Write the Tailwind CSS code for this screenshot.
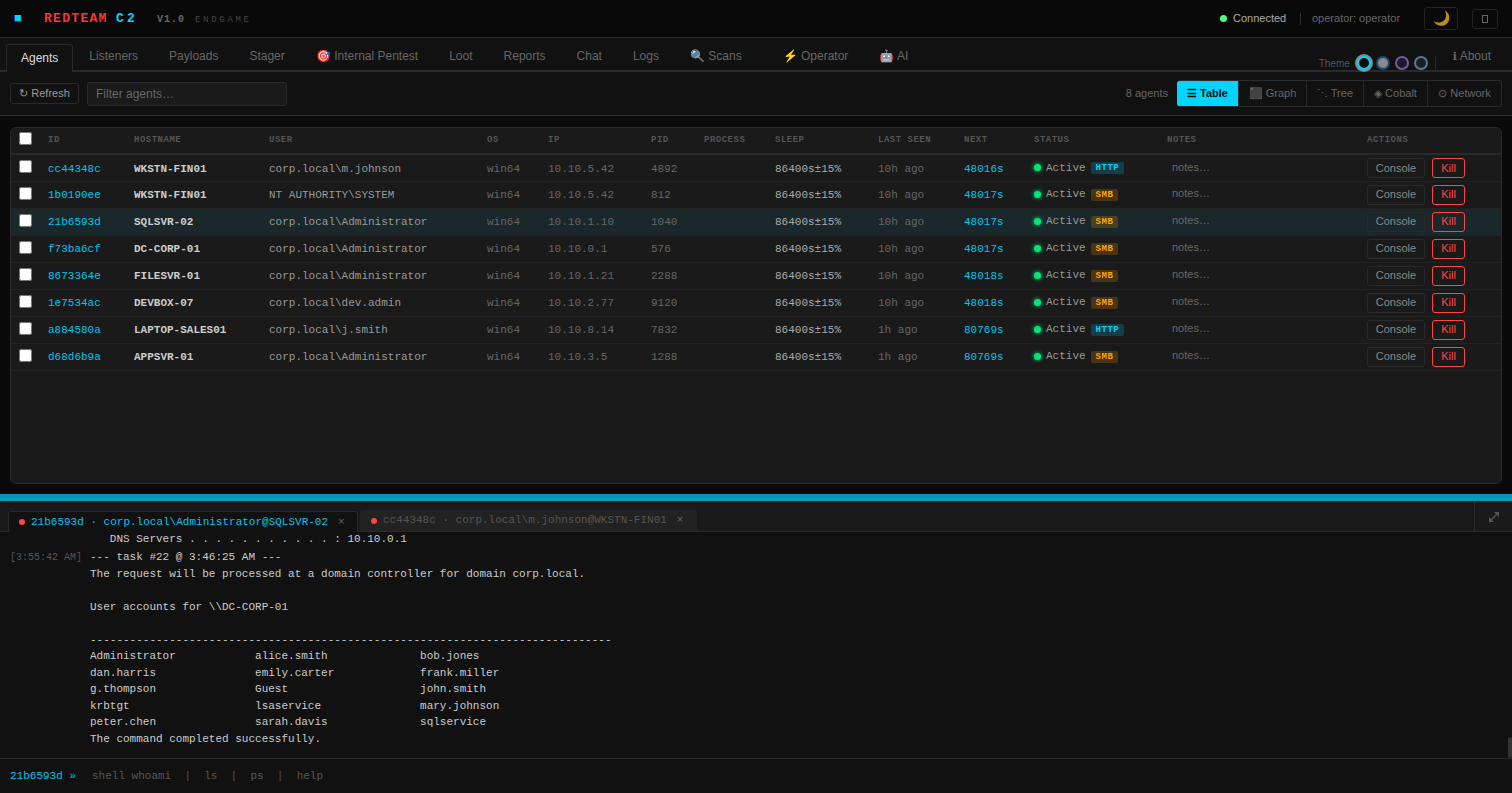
<!DOCTYPE html>
<html lang="en">
<head>
<meta charset="utf-8">
<title>RedTeam C2</title>
<script src="https://cdn.jsdelivr.net/npm/@tailwindcss/browser@4"></script>
</head>
<body class="bg-[#0a0a0a]">
<div class="w-[1512px] h-[793px] overflow-hidden flex flex-col font-['Liberation_Sans',sans-serif] text-[#ccc]">

  <!-- Header -->
  <header class="h-[38px] shrink-0 flex items-center bg-[#090909] border-b border-[#2a2a2a] pl-[14px] pr-[14px]">
    <span class="font-['Liberation_Mono',monospace] text-[13px] font-bold text-[#00d4ff] w-[30px]">■</span>
    <span class="font-['Liberation_Mono',monospace] text-[13px] font-bold tracking-[1.3px] text-[#ff3333] w-[72px]">REDTEAM</span>
    <span class="font-['Liberation_Mono',monospace] text-[13px] font-bold tracking-[3.2px] text-[#00d4ff] w-[41px]">C2</span>
    <span class="font-['Liberation_Mono',monospace] text-[10px] font-bold tracking-[1px] text-[#666] w-[38px] translate-y-px">V1.0</span>
    <span class="font-['Liberation_Mono',monospace] text-[9px] tracking-[2.7px] text-[#444] translate-y-[2px]">ENDGAME</span>
    <div class="ml-auto flex items-center">
      <span class="w-[7px] h-[7px] rounded-full bg-[#4dff88] mr-[6px]"></span>
      <span class="text-[11px] text-[#aaa] w-[67px]">Connected</span>
      <span class="w-px h-3 bg-[#2a2a2a] mr-[11px]"></span>
      <span class="text-[11px] text-[#666] w-[112px]">operator: operator</span>
      <span class="w-[34px] h-[23px] flex items-center justify-center border border-[#222] rounded-[3px] mr-[14px]"><span class="text-[14px] opacity-70">🌙</span></span>
      <span class="w-[26px] h-[20px] flex items-center justify-center border border-[#222] rounded-[3px]"><span class="w-[6px] h-[8px] border border-[#666]"></span></span>
    </div>
  </header>

  <!-- Tabs -->
  <nav class="h-[34px] shrink-0 flex items-end bg-[#111] border-b-2 border-[#2a2a2a] pl-[6px] pr-[6px] text-[12px] text-[#666] gap-px">
    <span class="relative top-[2px] h-[28px] px-[14px] pb-[2px] flex items-center bg-[#111] text-[#ddd] border border-b-0 border-[#2a2a2a] rounded-t-[3px]">Agents</span>
    <span class="h-[28px] px-[15px] flex items-center">Listeners</span>
    <span class="h-[28px] px-[15px] flex items-center">Payloads</span>
    <span class="h-[28px] px-[15px] flex items-center">Stager</span>
    <span class="h-[28px] px-[15px] flex items-center">🎯 Internal Pentest</span>
    <span class="h-[28px] px-[15px] flex items-center">Loot</span>
    <span class="h-[28px] px-[15px] flex items-center">Reports</span>
    <span class="h-[28px] px-[15px] flex items-center">Chat</span>
    <span class="h-[28px] px-[15px] flex items-center">Logs</span>
    <span class="h-[28px] px-[15px] flex items-center">🔍 Scans</span>
    <span class="h-[28px] px-[15px] ml-[10px] flex items-center">⚡ Operator</span>
    <span class="h-[28px] px-[15px] flex items-center">🤖 AI</span>
    <div class="ml-auto flex items-center h-[28px] relative">
      <div class="flex items-center h-[15px] relative top-[7px]">
        <span class="text-[10px] text-[#555] mr-[7px]">Theme</span>
        <span class="w-[14px] h-[14px] rounded-full border-2 border-[#00d4ff] bg-[#0a0a0a] ring-2 ring-[#888] mr-[5px]"></span>
        <span class="w-[14px] h-[14px] rounded-full border-2 border-[#1a4a7a] bg-[#8a8a8a] mr-[5px]"></span>
        <span class="w-[14px] h-[14px] rounded-full border-2 border-[#7a5a9a] bg-[#1a1a2a] mr-[5px]"></span>
        <span class="w-[14px] h-[14px] rounded-full border-2 border-[#5a7a8a] bg-[#1a1f2a] mr-[7px]"></span>
        <span class="w-px h-[14px] bg-[#2a2a2a] mr-[2px]"></span>
      </div>
      <span class="pl-[15px] pr-[15px]"><span class="font-['DejaVu_Sans',sans-serif] text-[11px]">ℹ</span> About</span>
    </div>
  </nav>

  <!-- Toolbar -->
  <div class="h-[44px] shrink-0 flex items-center bg-[#111] border-b border-[#2a2a2a] pl-[10px] pr-[10px]">
    <button class="h-[21px] w-[69px] flex items-center justify-center border border-[#2a2a2a] rounded-[3px] text-[11px] text-[#999] mr-[8px]">↻ Refresh</button>
    <input class="h-[24px] w-[200px] bg-[#1a1a1a] border border-[#2a2a2a] rounded-[3px] px-2 text-[12px] text-[#ccc] placeholder:text-[#666]" placeholder="Filter agents…">
    <span class="ml-auto text-[11px] text-[#666] mr-[9px]">8 agents</span>
    <div class="flex h-[27px] border-y border-r border-[#2a2a2a] rounded-[3px] overflow-hidden text-[11px] text-[#666]">
      <span class="w-[62px] -my-px flex items-center justify-center bg-[#00d4ff] text-[#0a0a0a] font-bold border-r border-[#2a2a2a]">☰ Table</span>
      <span class="w-[68px] flex items-center justify-center border-r border-[#2a2a2a]">⬛ Graph</span>
      <span class="w-[57px] flex items-center justify-center border-r border-[#2a2a2a]">⋱ Tree</span>
      <span class="w-[64px] flex items-center justify-center border-r border-[#2a2a2a]">◈ Cobalt</span>
      <span class="w-[73px] flex items-center justify-center">⊙ Network</span>
    </div>
  </div>

  <!-- Agents table -->
  <main class="h-[378px] shrink-0 bg-[#0a0a0a] pt-[11px] pb-[10px] px-[10px]">
    <div class="h-full bg-[#1a1a1a] border border-[#2a2a2a] rounded-[6px] overflow-hidden">
      <table class="w-full table-fixed border-collapse font-['Liberation_Mono',monospace] text-[11px]">
        <colgroup>
          <col class="w-[29px]"><col class="w-[86px]"><col class="w-[135px]"><col class="w-[218px]"><col class="w-[61px]"><col class="w-[103px]"><col class="w-[53px]"><col class="w-[71px]"><col class="w-[103px]"><col class="w-[86px]"><col class="w-[70px]"><col class="w-[133px]"><col class="w-[200px]"><col>
        </colgroup>
        <thead>
          <tr class="h-[26px] border-b-2 border-[#2a2a2a] text-left text-[9px] font-bold tracking-[0.5px] text-[#555]">
            <th class="pl-2"><input type="checkbox" class="block w-[13px] h-[13px] -translate-y-[2px]"></th>
            <th class="pl-2">ID</th><th class="pl-2">HOSTNAME</th><th class="pl-2">USER</th><th class="pl-2">OS</th><th class="pl-2">IP</th><th class="pl-2">PID</th><th class="pl-2">PROCESS</th><th class="pl-2">SLEEP</th><th class="pl-2">LAST SEEN</th><th class="pl-2">NEXT</th><th class="pl-2">STATUS</th><th class="pl-2">NOTES</th><th class="pl-2">ACTIONS</th>
          </tr>
        </thead>
        <tbody class="[&>tr>td]:pt-[2px] [&>tr>td:last-child]:pt-0 [&>tr>td:nth-child(13)]:pt-0">
          <tr class="h-[27px] border-b border-[#222]">
            <td class="pl-2"><input type="checkbox" class="block w-[13px] h-[13px] -translate-y-[2px]"></td>
            <td class="pl-2 text-[#00c4ec]">cc44348c</td><td class="pl-2 font-bold text-[#ccc]">WKSTN-FIN01</td><td class="pl-2 text-[#999]">corp.local\m.johnson</td><td class="pl-2 text-[#666]">win64</td><td class="pl-2 text-[#666]">10.10.5.42</td><td class="pl-2 text-[#666]">4892</td><td class="pl-2"></td><td class="pl-2 text-[#aaa]">86400s±15%</td><td class="pl-2 text-[#666]">10h ago</td><td class="pl-2 text-[#00c4ec]">48016s</td>
            <td class="pl-2"><div class="flex items-center -translate-y-px"><span class="w-[7px] h-[7px] rounded-full bg-[#00e676] shadow-[0_0_4px_#00e676] mr-[5px]"></span><span class="text-[#999] mr-[5px]">Active</span><span class="px-[5px] h-[12px] leading-[12px] tracking-[0.5px] rounded-[2px] bg-[#00d4ff]/20 text-[#00d4ff] text-[9px] font-bold">HTTP</span></div></td>
            <td class="pl-[13px] font-['Liberation_Sans',sans-serif] text-[#666]"><span class="block -translate-y-px">notes…</span></td>
            <td class="pl-2"><div class="flex gap-[7px] font-['Liberation_Sans',sans-serif]"><span class="w-[58px] h-[20px] flex items-center justify-center border border-[#2a2a2a] rounded-[3px] text-[#888]">Console</span><span class="w-[33px] h-[20px] flex items-center justify-center border border-[#ff4444] rounded-[3px] text-[#ff4444]">Kill</span></div></td>
          </tr>
          <tr class="h-[27px] border-b border-[#222]">
            <td class="pl-2"><input type="checkbox" class="block w-[13px] h-[13px] -translate-y-[2px]"></td>
            <td class="pl-2 text-[#00c4ec]">1b0190ee</td><td class="pl-2 font-bold text-[#ccc]">WKSTN-FIN01</td><td class="pl-2 text-[#999]">NT AUTHORITY\SYSTEM</td><td class="pl-2 text-[#666]">win64</td><td class="pl-2 text-[#666]">10.10.5.42</td><td class="pl-2 text-[#666]">812</td><td class="pl-2"></td><td class="pl-2 text-[#aaa]">86400s±15%</td><td class="pl-2 text-[#666]">10h ago</td><td class="pl-2 text-[#00c4ec]">48017s</td>
            <td class="pl-2"><div class="flex items-center -translate-y-px"><span class="w-[7px] h-[7px] rounded-full bg-[#00e676] shadow-[0_0_4px_#00e676] mr-[5px]"></span><span class="text-[#999] mr-[5px]">Active</span><span class="px-[5px] h-[12px] leading-[12px] tracking-[0.5px] rounded-[2px] bg-[#ffa500]/20 text-[#ffa500] text-[9px] font-bold">SMB</span></div></td>
            <td class="pl-[13px] font-['Liberation_Sans',sans-serif] text-[#666]"><span class="block -translate-y-px">notes…</span></td>
            <td class="pl-2"><div class="flex gap-[7px] font-['Liberation_Sans',sans-serif]"><span class="w-[58px] h-[20px] flex items-center justify-center border border-[#2a2a2a] rounded-[3px] text-[#888]">Console</span><span class="w-[33px] h-[20px] flex items-center justify-center border border-[#ff4444] rounded-[3px] text-[#ff4444]">Kill</span></div></td>
          </tr>
          <tr class="h-[27px] border-b border-[#222] bg-[#1a272b]">
            <td class="pl-2"><input type="checkbox" class="block w-[13px] h-[13px] -translate-y-[2px]"></td>
            <td class="pl-2 text-[#00c4ec]">21b6593d</td><td class="pl-2 font-bold text-[#ccc]">SQLSVR-02</td><td class="pl-2 text-[#999]">corp.local\Administrator</td><td class="pl-2 text-[#666]">win64</td><td class="pl-2 text-[#666]">10.10.1.10</td><td class="pl-2 text-[#666]">1040</td><td class="pl-2"></td><td class="pl-2 text-[#aaa]">86400s±15%</td><td class="pl-2 text-[#666]">10h ago</td><td class="pl-2 text-[#00c4ec]">48017s</td>
            <td class="pl-2"><div class="flex items-center -translate-y-px"><span class="w-[7px] h-[7px] rounded-full bg-[#00e676] shadow-[0_0_4px_#00e676] mr-[5px]"></span><span class="text-[#999] mr-[5px]">Active</span><span class="px-[5px] h-[12px] leading-[12px] tracking-[0.5px] rounded-[2px] bg-[#ffa500]/20 text-[#ffa500] text-[9px] font-bold">SMB</span></div></td>
            <td class="pl-[13px] font-['Liberation_Sans',sans-serif] text-[#666]"><span class="block -translate-y-px">notes…</span></td>
            <td class="pl-2"><div class="flex gap-[7px] font-['Liberation_Sans',sans-serif]"><span class="w-[58px] h-[20px] flex items-center justify-center border border-[#2a2a2a] rounded-[3px] text-[#888]">Console</span><span class="w-[33px] h-[20px] flex items-center justify-center border border-[#ff4444] rounded-[3px] text-[#ff4444]">Kill</span></div></td>
          </tr>
          <tr class="h-[27px] border-b border-[#222]">
            <td class="pl-2"><input type="checkbox" class="block w-[13px] h-[13px] -translate-y-[2px]"></td>
            <td class="pl-2 text-[#00c4ec]">f73ba6cf</td><td class="pl-2 font-bold text-[#ccc]">DC-CORP-01</td><td class="pl-2 text-[#999]">corp.local\Administrator</td><td class="pl-2 text-[#666]">win64</td><td class="pl-2 text-[#666]">10.10.0.1</td><td class="pl-2 text-[#666]">576</td><td class="pl-2"></td><td class="pl-2 text-[#aaa]">86400s±15%</td><td class="pl-2 text-[#666]">10h ago</td><td class="pl-2 text-[#00c4ec]">48017s</td>
            <td class="pl-2"><div class="flex items-center -translate-y-px"><span class="w-[7px] h-[7px] rounded-full bg-[#00e676] shadow-[0_0_4px_#00e676] mr-[5px]"></span><span class="text-[#999] mr-[5px]">Active</span><span class="px-[5px] h-[12px] leading-[12px] tracking-[0.5px] rounded-[2px] bg-[#ffa500]/20 text-[#ffa500] text-[9px] font-bold">SMB</span></div></td>
            <td class="pl-[13px] font-['Liberation_Sans',sans-serif] text-[#666]"><span class="block -translate-y-px">notes…</span></td>
            <td class="pl-2"><div class="flex gap-[7px] font-['Liberation_Sans',sans-serif]"><span class="w-[58px] h-[20px] flex items-center justify-center border border-[#2a2a2a] rounded-[3px] text-[#888]">Console</span><span class="w-[33px] h-[20px] flex items-center justify-center border border-[#ff4444] rounded-[3px] text-[#ff4444]">Kill</span></div></td>
          </tr>
          <tr class="h-[27px] border-b border-[#222]">
            <td class="pl-2"><input type="checkbox" class="block w-[13px] h-[13px] -translate-y-[2px]"></td>
            <td class="pl-2 text-[#00c4ec]">8673364e</td><td class="pl-2 font-bold text-[#ccc]">FILESVR-01</td><td class="pl-2 text-[#999]">corp.local\Administrator</td><td class="pl-2 text-[#666]">win64</td><td class="pl-2 text-[#666]">10.10.1.21</td><td class="pl-2 text-[#666]">2288</td><td class="pl-2"></td><td class="pl-2 text-[#aaa]">86400s±15%</td><td class="pl-2 text-[#666]">10h ago</td><td class="pl-2 text-[#00c4ec]">48018s</td>
            <td class="pl-2"><div class="flex items-center -translate-y-px"><span class="w-[7px] h-[7px] rounded-full bg-[#00e676] shadow-[0_0_4px_#00e676] mr-[5px]"></span><span class="text-[#999] mr-[5px]">Active</span><span class="px-[5px] h-[12px] leading-[12px] tracking-[0.5px] rounded-[2px] bg-[#ffa500]/20 text-[#ffa500] text-[9px] font-bold">SMB</span></div></td>
            <td class="pl-[13px] font-['Liberation_Sans',sans-serif] text-[#666]"><span class="block -translate-y-px">notes…</span></td>
            <td class="pl-2"><div class="flex gap-[7px] font-['Liberation_Sans',sans-serif]"><span class="w-[58px] h-[20px] flex items-center justify-center border border-[#2a2a2a] rounded-[3px] text-[#888]">Console</span><span class="w-[33px] h-[20px] flex items-center justify-center border border-[#ff4444] rounded-[3px] text-[#ff4444]">Kill</span></div></td>
          </tr>
          <tr class="h-[27px] border-b border-[#222]">
            <td class="pl-2"><input type="checkbox" class="block w-[13px] h-[13px] -translate-y-[2px]"></td>
            <td class="pl-2 text-[#00c4ec]">1e7534ac</td><td class="pl-2 font-bold text-[#ccc]">DEVBOX-07</td><td class="pl-2 text-[#999]">corp.local\dev.admin</td><td class="pl-2 text-[#666]">win64</td><td class="pl-2 text-[#666]">10.10.2.77</td><td class="pl-2 text-[#666]">9120</td><td class="pl-2"></td><td class="pl-2 text-[#aaa]">86400s±15%</td><td class="pl-2 text-[#666]">10h ago</td><td class="pl-2 text-[#00c4ec]">48018s</td>
            <td class="pl-2"><div class="flex items-center -translate-y-px"><span class="w-[7px] h-[7px] rounded-full bg-[#00e676] shadow-[0_0_4px_#00e676] mr-[5px]"></span><span class="text-[#999] mr-[5px]">Active</span><span class="px-[5px] h-[12px] leading-[12px] tracking-[0.5px] rounded-[2px] bg-[#ffa500]/20 text-[#ffa500] text-[9px] font-bold">SMB</span></div></td>
            <td class="pl-[13px] font-['Liberation_Sans',sans-serif] text-[#666]"><span class="block -translate-y-px">notes…</span></td>
            <td class="pl-2"><div class="flex gap-[7px] font-['Liberation_Sans',sans-serif]"><span class="w-[58px] h-[20px] flex items-center justify-center border border-[#2a2a2a] rounded-[3px] text-[#888]">Console</span><span class="w-[33px] h-[20px] flex items-center justify-center border border-[#ff4444] rounded-[3px] text-[#ff4444]">Kill</span></div></td>
          </tr>
          <tr class="h-[27px] border-b border-[#222]">
            <td class="pl-2"><input type="checkbox" class="block w-[13px] h-[13px] -translate-y-[2px]"></td>
            <td class="pl-2 text-[#00c4ec]">a884580a</td><td class="pl-2 font-bold text-[#ccc]">LAPTOP-SALES01</td><td class="pl-2 text-[#999]">corp.local\j.smith</td><td class="pl-2 text-[#666]">win64</td><td class="pl-2 text-[#666]">10.10.8.14</td><td class="pl-2 text-[#666]">7832</td><td class="pl-2"></td><td class="pl-2 text-[#aaa]">86400s±15%</td><td class="pl-2 text-[#666]">1h ago</td><td class="pl-2 text-[#00c4ec]">80769s</td>
            <td class="pl-2"><div class="flex items-center -translate-y-px"><span class="w-[7px] h-[7px] rounded-full bg-[#00e676] shadow-[0_0_4px_#00e676] mr-[5px]"></span><span class="text-[#999] mr-[5px]">Active</span><span class="px-[5px] h-[12px] leading-[12px] tracking-[0.5px] rounded-[2px] bg-[#00d4ff]/20 text-[#00d4ff] text-[9px] font-bold">HTTP</span></div></td>
            <td class="pl-[13px] font-['Liberation_Sans',sans-serif] text-[#666]"><span class="block -translate-y-px">notes…</span></td>
            <td class="pl-2"><div class="flex gap-[7px] font-['Liberation_Sans',sans-serif]"><span class="w-[58px] h-[20px] flex items-center justify-center border border-[#2a2a2a] rounded-[3px] text-[#888]">Console</span><span class="w-[33px] h-[20px] flex items-center justify-center border border-[#ff4444] rounded-[3px] text-[#ff4444]">Kill</span></div></td>
          </tr>
          <tr class="h-[27px] border-b border-[#222]">
            <td class="pl-2"><input type="checkbox" class="block w-[13px] h-[13px] -translate-y-[2px]"></td>
            <td class="pl-2 text-[#00c4ec]">d68d6b9a</td><td class="pl-2 font-bold text-[#ccc]">APPSVR-01</td><td class="pl-2 text-[#999]">corp.local\Administrator</td><td class="pl-2 text-[#666]">win64</td><td class="pl-2 text-[#666]">10.10.3.5</td><td class="pl-2 text-[#666]">1288</td><td class="pl-2"></td><td class="pl-2 text-[#aaa]">86400s±15%</td><td class="pl-2 text-[#666]">1h ago</td><td class="pl-2 text-[#00c4ec]">80769s</td>
            <td class="pl-2"><div class="flex items-center -translate-y-px"><span class="w-[7px] h-[7px] rounded-full bg-[#00e676] shadow-[0_0_4px_#00e676] mr-[5px]"></span><span class="text-[#999] mr-[5px]">Active</span><span class="px-[5px] h-[12px] leading-[12px] tracking-[0.5px] rounded-[2px] bg-[#ffa500]/20 text-[#ffa500] text-[9px] font-bold">SMB</span></div></td>
            <td class="pl-[13px] font-['Liberation_Sans',sans-serif] text-[#666]"><span class="block -translate-y-px">notes…</span></td>
            <td class="pl-2"><div class="flex gap-[7px] font-['Liberation_Sans',sans-serif]"><span class="w-[58px] h-[20px] flex items-center justify-center border border-[#2a2a2a] rounded-[3px] text-[#888]">Console</span><span class="w-[33px] h-[20px] flex items-center justify-center border border-[#ff4444] rounded-[3px] text-[#ff4444]">Kill</span></div></td>
          </tr>
        </tbody>
      </table>
    </div>
  </main>

  <!-- Splitter -->
  <div class="h-[7px] shrink-0 bg-[#0099bb]"></div>

  <!-- Console tabs -->
  <div class="h-[31px] shrink-0 flex items-end bg-[#1a1a1a] border-b border-[#2a2a2a] pl-2 font-['Liberation_Mono',monospace] text-[11px]">
    <div class="relative top-px h-[21px] w-[350px] flex items-center pl-[10px] bg-[#111] border border-b-0 border-[#2a2a2a] rounded-t-[3px] text-[#00c4ec]">
      <span class="w-[6px] h-[6px] rounded-full bg-[#ff4444] mr-[6px]"></span>
      <span>21b6593d · corp.local\Administrator@SQLSVR-02</span>
      <span class="ml-[10px] text-[#666]">×</span>
    </div>
    <div class="ml-[2px] h-[21px] w-[337px] flex items-center pl-[11px] bg-[#222] rounded-t-[3px] text-[#555]">
      <span class="w-[6px] h-[6px] rounded-full bg-[#ff4444] mr-[6px]"></span>
      <span>cc44348c · corp.local\m.johnson@WKSTN-FIN01</span>
      <span class="ml-[10px] text-[#666]">×</span>
    </div>
    <div class="ml-auto w-[38px] h-full flex items-center justify-center border-l border-[#2a2a2a]">
      <svg width="12" height="12" viewBox="0 0 12 12" class="text-[#555] translate-y-px" fill="currentColor" stroke="none">
        <path d="M2.5 9.5 L9.5 2.5" stroke="currentColor" stroke-width="1.5" fill="none"/>
        <path d="M11 1 L11 6 L6 1 Z"/>
        <path d="M1 11 L1 6 L6 11 Z"/>
      </svg>
    </div>
  </div>

  <!-- Console output -->
  <section class="relative flex-1 min-h-0 overflow-hidden bg-[#111] font-['Liberation_Mono',monospace] text-[11px] leading-[16.5px] text-[#ccc] pl-[10px]">
    <div class="-mt-[1px] pl-[80px] whitespace-pre">   DNS Servers . . . . . . . . . . . : 10.10.0.1</div>
    <div class="flex mt-[1.9px]">
      <span class="w-[80px] shrink-0 text-[10px] text-[#555] translate-y-px">[3:55:42 AM]</span>
      <div class="whitespace-pre">--- task #22 @ 3:46:25 AM ---
The request will be processed at a domain controller for domain corp.local.

User accounts for \\DC-CORP-01

-------------------------------------------------------------------------------
Administrator            alice.smith              bob.jones
dan.harris               emily.carter             frank.miller
g.thompson               Guest                    john.smith
krbtgt                   lsaservice               mary.johnson
peter.chen               sarah.davis              sqlservice
The command completed successfully.</div>
    </div>
    <div class="absolute right-0 bottom-0 w-[4px] h-[21px] bg-[#333] rounded-[2px]"></div>
  </section>

  <!-- Prompt -->
  <footer class="h-[35px] shrink-0 flex items-center bg-[#111] border-t border-[#2a2a2a] pl-[10px] font-['Liberation_Mono',monospace] text-[11px]">
    <span class="w-[82px] text-[#00c4ec]">21b6593d »</span>
    <span class="text-[#555] whitespace-pre">shell whoami  |  ls  |  ps  |  help</span>
  </footer>
</div>
</body>
</html>
